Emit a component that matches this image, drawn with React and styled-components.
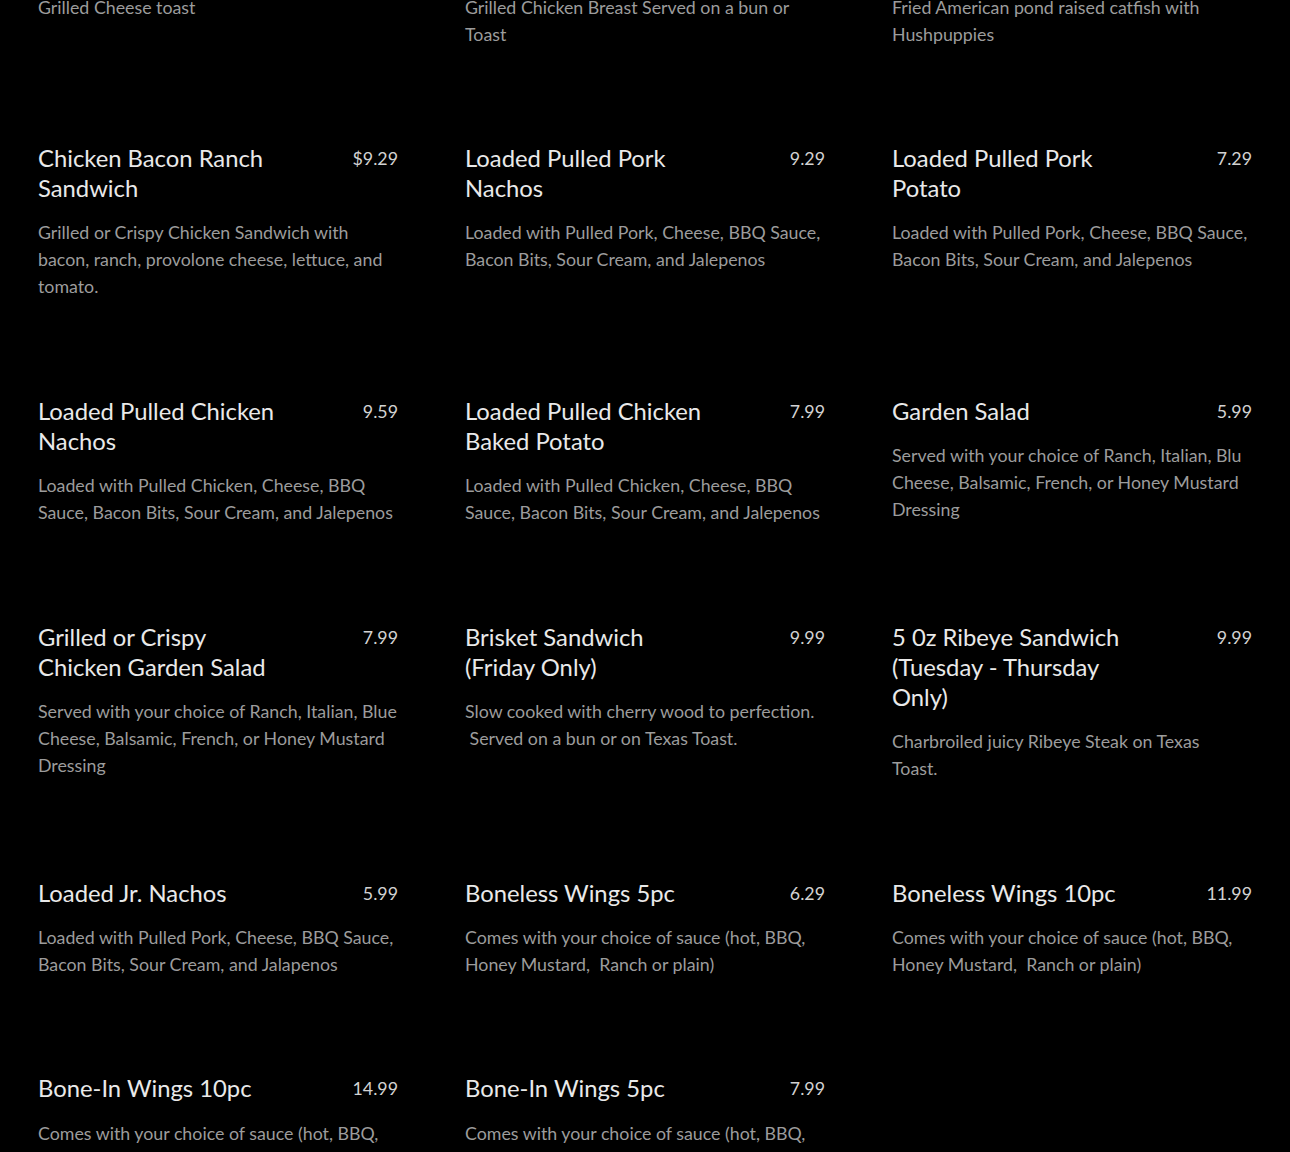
import styled, { createGlobalStyle } from 'styled-components'

const GlobalStyle = createGlobalStyle`
    html, body {
        margin: 0;
        padding: 0;
        background: #000;
    }
    body {
        font-family: Lato, "Open Sans", sans-serif;
    }
`;

const MenuPage = styled.div`
    width: 100%;
    min-height: 100vh;
    background: #000;
    overflow: hidden;
`;

const MenuGrid = styled.div`
    display: grid;
    grid-template-columns: repeat(3, 360px);
    column-gap: 67px;
    row-gap: 95.4px;
    padding: 0 38px;
    margin-top: -53px;
    align-items: start;
`;

const MenuItem = styled.div`
    display: flex;
    flex-direction: column;
`;

const ItemHeader = styled.div`
    display: flex;
    justify-content: space-between;
    align-items: flex-start;
`;

const ItemName = styled.h3`
    margin: 0;
    width: 252px;
    font-size: 23.8px;
    line-height: 30px;
    font-weight: 400;
    color: #e9e9e9;
`;

const ItemPrice = styled.span`
    font-size: 17.8px;
    line-height: 30px;
    font-weight: 400;
    color: #d2d2d2;
`;

const ItemDescription = styled.p`
    margin: 16.5px 0 0;
    font-size: 17.8px;
    line-height: 27px;
    color: #9c9c9c;
    white-space: pre-wrap;
`;

const menu = [
    { name: 'Grilled Cheese', price: '5.49', description: 'Grilled Cheese toast' },
    { name: 'Grilled Chicken', price: '8.99', description: 'Grilled Chicken Breast Served on a bun or Toast' },
    { name: 'Catfish Basket', price: '10.99', description: 'Fried American pond raised catfish with Hushpuppies' },
    { name: 'Chicken Bacon Ranch Sandwich', price: '$9.29', description: 'Grilled or Crispy Chicken Sandwich with bacon, ranch, provolone cheese, lettuce, and tomato.' },
    { name: 'Loaded Pulled Pork Nachos', price: '9.29', description: 'Loaded with Pulled Pork, Cheese, BBQ Sauce, Bacon Bits, Sour Cream, and Jalepenos' },
    { name: 'Loaded Pulled Pork Potato', price: '7.29', description: 'Loaded with Pulled Pork, Cheese, BBQ Sauce, Bacon Bits, Sour Cream, and Jalepenos' },
    { name: 'Loaded Pulled Chicken Nachos', price: '9.59', description: 'Loaded with Pulled Chicken, Cheese, BBQ Sauce, Bacon Bits, Sour Cream, and Jalepenos' },
    { name: 'Loaded Pulled Chicken Baked Potato', price: '7.99', description: 'Loaded with Pulled Chicken, Cheese, BBQ Sauce, Bacon Bits, Sour Cream, and Jalepenos' },
    { name: 'Garden Salad', price: '5.99', description: 'Served with your choice of Ranch, Italian, Blu Cheese, Balsamic, French, or Honey Mustard Dressing' },
    { name: 'Grilled or Crispy Chicken Garden Salad', price: '7.99', description: 'Served with your choice of Ranch, Italian, Blue Cheese, Balsamic, French, or Honey Mustard Dressing' },
    { name: 'Brisket Sandwich (Friday Only)', price: '9.99', description: 'Slow cooked with cherry wood to perfection.\n Served on a bun or on Texas Toast.' },
    { name: '5 0z Ribeye Sandwich (Tuesday - Thursday Only)', price: '9.99', description: 'Charbroiled juicy Ribeye Steak on Texas\nToast.' },
    { name: 'Loaded Jr. Nachos', price: '5.99', description: 'Loaded with Pulled Pork, Cheese, BBQ Sauce, Bacon Bits, Sour Cream, and Jalapenos' },
    { name: 'Boneless Wings 5pc', price: '6.29', description: 'Comes with your choice of sauce (hot, BBQ, Honey Mustard,  Ranch or plain)' },
    { name: 'Boneless Wings 10pc', price: '11.99', description: 'Comes with your choice of sauce (hot, BBQ, Honey Mustard,  Ranch or plain)' },
    { name: 'Bone-In Wings 10pc', price: '14.99', description: 'Comes with your choice of sauce (hot, BBQ, Honey Mustard,  Ranch or plain)' },
    { name: 'Bone-In Wings 5pc', price: '7.99', description: 'Comes with your choice of sauce (hot, BBQ, Honey Mustard,  Ranch or plain)' },
];

function App() {
    return (
        <MenuPage>
            <GlobalStyle />
            <MenuGrid>
                {menu.map((item) => (
                    <MenuItem key={item.name}>
                        <ItemHeader>
                            <ItemName>{item.name}</ItemName>
                            <ItemPrice>{item.price}</ItemPrice>
                        </ItemHeader>
                        <ItemDescription>{item.description}</ItemDescription>
                    </MenuItem>
                ))}
            </MenuGrid>
        </MenuPage>
    );
}

export default App;
